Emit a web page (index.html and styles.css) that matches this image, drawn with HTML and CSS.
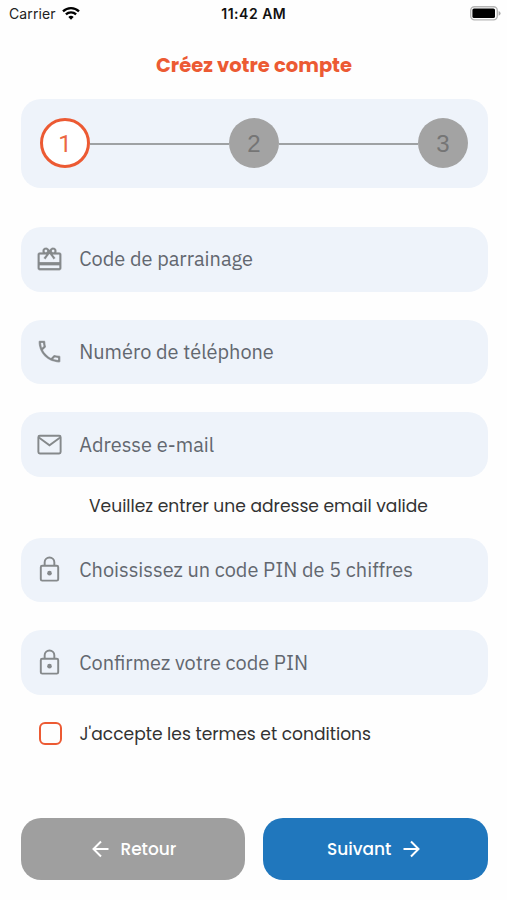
FILE: index.html
```html
<!DOCTYPE html>
<html lang="fr">
<head>
<meta charset="utf-8">
<title>Créez votre compte</title>
<link rel="stylesheet" href="styles.css">
</head>
<body>
<div class="screen">
  <header class="status">
    <div class="status-left"><span class="carrier">Carrier</span>
      <svg class="wifi" viewBox="0 0 18 14"><path d="M9 13.7 6.3 10.9a4 4 0 0 1 5.4 0Z"/><path class="arc" d="M3.9 8.4a7.3 7.3 0 0 1 10.2 0M1 5.3a11.5 11.5 0 0 1 16 0"/></svg>
    </div>
    <span class="time">11:42 AM</span>
    <div class="status-right">
      <svg class="battery" viewBox="0 0 31 15"><rect x=".7" y=".7" width="26.6" height="13.2" rx="3.8" fill="#fff" stroke="#b5b5b5" stroke-width="1.4"/><rect x="2.4" y="2.5" width="22.6" height="9.6" rx="1.6" fill="#000"/><path d="M28.6 5v4.8q2-1 2-2.4T28.6 5Z" fill="#aaa"/></svg>
    </div>
  </header>
  <h1 class="title">Créez votre compte</h1>
  <div class="steps">
    <span class="step active">1</span><span class="line"></span><span class="step">2</span><span class="line"></span><span class="step">3</span>
  </div>
  <form class="form">
    <label class="field">
      <svg class="icon gift" viewBox="0 0 24 24"><path d="M20 6h-2.18c.11-.31.18-.65.18-1 0-1.66-1.34-3-3-3-1.05 0-1.96.54-2.5 1.35l-.5.67-.5-.68C10.96 2.54 10.05 2 9 2 7.34 2 6 3.34 6 5c0 .35.07.69.18 1H4c-1.11 0-1.99.89-1.99 2L2 19c0 1.11.89 2 2 2h16c1.11 0 2-.89 2-2V8c0-1.11-.89-2-2-2zm-5-2c.55 0 1 .45 1 1s-.45 1-1 1-1-.45-1-1 .45-1 1-1zM9 4c.55 0 1 .45 1 1s-.45 1-1 1-1-.45-1-1 .45-1 1-1zm11 15H4v-2h16v2zm0-5H4V8h5.08L7 10.83 8.62 12 11 8.76l1-1.36 1 1.36L15.38 12 17 10.83 14.92 8H20v6z"/></svg>
      <span class="hint">Code de parrainage</span>
    </label>
    <label class="field">
      <svg class="icon handset" viewBox="0 0 24 24"><path d="M6.54 5c.06.89.21 1.76.45 2.59l-1.2 1.2c-.41-1.2-.67-2.47-.76-3.79h1.51m9.86 12.02c.85.24 1.72.39 2.6.45v1.49c-1.32-.09-2.59-.35-3.8-.75l1.2-1.19M7.5 3H4c-.55 0-1 .45-1 1 0 9.39 7.61 17 17 17 .55 0 1-.45 1-1v-3.49c0-.55-.45-1-1-1-1.24 0-2.45-.2-3.57-.57-.1-.04-.21-.05-.31-.05-.26 0-.51.1-.71.29l-2.2 2.2c-2.83-1.45-5.15-3.76-6.59-6.59l2.2-2.2c.28-.28.36-.67.25-1.02C8.7 6.45 8.5 5.25 8.5 4c0-.55-.45-1-1-1z"/></svg>
      <span class="hint">Numéro de téléphone</span>
    </label>
    <label class="field">
      <svg class="icon outline" viewBox="0 0 24 24"><rect x="2.8" y="4.8" width="18.4" height="14.6" rx="1.2"/><path d="m3.2 6.2 8.8 6.4 8.8-6.4"/></svg>
      <span class="hint">Adresse e-mail</span>
    </label>
    <p class="message">Veuillez entrer une adresse email valide</p>
    <label class="field">
      <svg class="icon outline" viewBox="0 0 24 24"><rect x="4.8" y="8.9" width="14.4" height="12.3" rx="1.2"/><path d="M8 8.9V6a4 4 0 0 1 8 0v2.9"/><circle class="dot" cx="12" cy="15" r="1.9"/></svg>
      <span class="hint">Choississez un code PIN de 5 chiffres</span>
    </label>
    <label class="field">
      <svg class="icon outline" viewBox="0 0 24 24"><rect x="4.8" y="8.9" width="14.4" height="12.3" rx="1.2"/><path d="M8 8.9V6a4 4 0 0 1 8 0v2.9"/><circle class="dot" cx="12" cy="15" r="1.9"/></svg>
      <span class="hint">Confirmez votre code PIN</span>
    </label>
    <div class="terms"><span class="box"></span><span class="terms-text">J'accepte les termes et conditions</span></div>
    <div class="actions">
      <button type="button" class="button back"><svg class="arrow" viewBox="0 0 18 18"><path d="M16.5 9H1.5M9 1.5 1.5 9 9 16.5"/></svg><span>Retour</span></button>
      <button type="button" class="button next"><span>Suivant</span><svg class="arrow" viewBox="0 0 18 18"><path d="M1.5 9h15M9 1.5 16.5 9 9 16.5"/></svg></button>
    </div>
  </form>
</div>
</body>
</html>
```
FILE: styles.css
```css
* { box-sizing: border-box; }
body { margin: 0; background: #fefefe; }
.screen {
  width: 507px;
  height: 900px;
  overflow: hidden;
  padding: 0 19.5px 0 20.5px;
  font-family: Poppins, Inter, sans-serif;
  color: #333;
}
.status {
  display: grid;
  grid-template-columns: 1fr auto 1fr;
  align-items: center;
  height: 27px;
  margin: 0 -11px 0 -11.5px;
  font: 14px/27px Inter, sans-serif;
  color: #222;
}
.status-left { display: flex; align-items: center; gap: 6px; }
.carrier { letter-spacing: .1px; }
.wifi { width: 18px; height: 14px; margin-top: -1px; fill: #000; }
.arc { fill: none; stroke: #000; stroke-width: 2.3; }
.time { font-weight: 600; color: #111; letter-spacing: .5px; }
.status-right { display: flex; justify-content: flex-end; }
.battery { width: 31px; height: 15px; margin-right: -2px; }
.title {
  margin: 24px 0 18px;
  height: 30px;
  font-size: 19.5px;
  line-height: 30px;
  font-weight: 700;
  text-align: center;
  color: #ec5a33;
}
.steps {
  display: flex;
  align-items: center;
  height: 88.5px;
  padding: 0 19.5px;
  border-radius: 20px;
  background: #eef3fa;
}
.step {
  width: 50px;
  height: 50px;
  border-radius: 50%;
  background: #a3a3a3;
  color: #757575;
  font: 24px/51px "Liberation Sans", sans-serif;
  text-align: center;
}
.step.active {
  border: 3px solid #ec5a33;
  background: #fff;
  color: #ec6744;
  font-family: Roboto, sans-serif;
  line-height: 46px;
}
.line { flex: 1; height: 2px; margin-top: 2px; background: #9ea1a3; }
.form { margin-top: 39.5px; }
.field {
  display: flex;
  align-items: center;
  height: 64.6px;
  margin-bottom: 28.1px;
  padding-left: 14.7px;
  border-radius: 20px;
  background: #eef3fa;
}
.icon { width: 29px; height: 29px; margin-right: 15px; fill: #85898b; }
.gift, .handset { stroke: #eef3fa; stroke-width: .25; }
.outline { fill: none; stroke: #85898b; stroke-width: 1.6; }
.dot { fill: #85898b; stroke: none; }
.hint {
  font: 19.95px/28px "IBM Plex Sans", "Noto Sans", sans-serif;
  color: #62676f;
  white-space: nowrap;
}
.message {
  height: 26px;
  margin: -11.7px 0 18.2px;
  padding-left: 9px;
  font-size: 17.1px;
  line-height: 26px;
  text-align: center;
}
.terms {
  display: flex;
  align-items: center;
  height: 26px;
  margin-top: -2.2px;
  padding-left: 18px;
}
.box { width: 23px; height: 23px; margin-right: 18px; border: 2.4px solid #ec5a33; border-radius: 6px; }
.terms-text { font-size: 17.1px; white-space: nowrap; }
.actions { display: grid; grid-template-columns: 1fr 1fr; gap: 18.5px; margin-top: 71px; }
.button {
  display: flex;
  align-items: center;
  justify-content: center;
  gap: 10.5px;
  height: 62px;
  padding: 0;
  border: 0;
  border-radius: 20px;
  color: #fff;
  font: 500 17px/26px Poppins, Inter, sans-serif;
}
.back { padding-left: 3px; background: #9f9f9f; }
.next { padding-right: 4px; background: #2077bd; }
.arrow { width: 18px; height: 18px; fill: none; stroke: #fff; stroke-width: 2; }
```
